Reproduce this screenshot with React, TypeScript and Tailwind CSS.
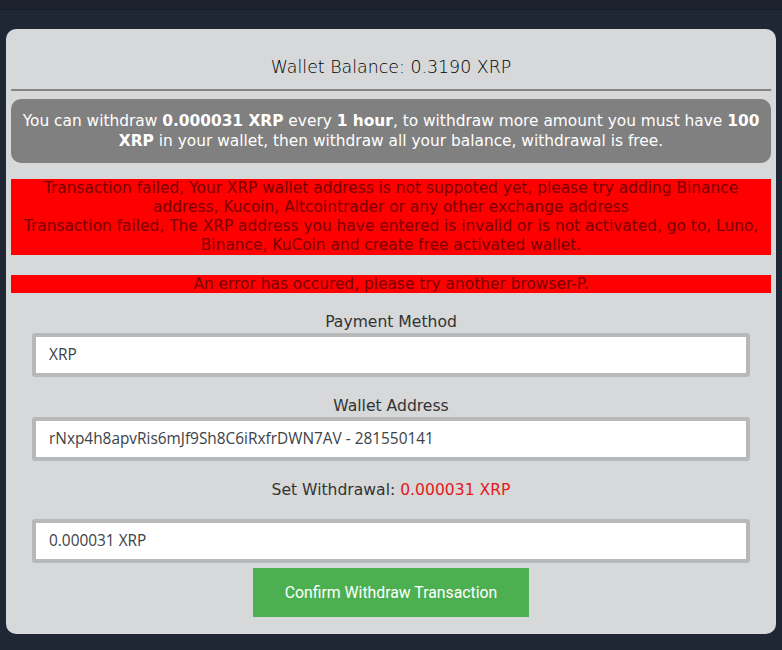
import React, { useState } from 'react';

const body = { fontFamily: '"DejaVu Sans", "Open Sans", sans-serif' };
const inputFont = { fontFamily: '"Open Sans", "Noto Sans", sans-serif' };

const Field: React.FC<{ label: React.ReactNode; value: string; labelClass?: string }> = ({
    label,
    value,
    labelClass = '',
}) => (
    <div className="px-[21px]">
        <p className={`text-center text-[15.6px] leading-[22px] text-[#333] ${labelClass}`}>{label}</p>
        <div className="h-[44px] rounded-[3px] border-[4px] border-[#b7b8b9] bg-white flex items-center px-[13px]">
            <span className="text-[15.4px] text-[#3c4248]" style={inputFont}>{value}</span>
        </div>
    </div>
);

const App: React.FC = () => {
    const [amount] = useState('0.000031 XRP');

    return (
        <div className="min-h-[650px] bg-[#1f2735]" style={body}>
            <div className="h-[10px] bg-[#1b222e] border-b border-[#171d27]" />
            <div className="px-[6px] pt-[19px] pb-[16px]">
                <div className="bg-[#d6d8da] rounded-[10px] px-[5px] pb-[17px]">
                    <h2 className="text-center text-[17.4px] leading-[22px] font-light text-[#000] pt-[27px] pb-[11px]">
                        Wallet Balance: 0.3190 XRP
                    </h2>
                    <div className="h-[2px] bg-[#858585]" />

                    <div className="mt-[8px] bg-[#808080] rounded-[10px] px-1 py-[12px] text-center text-white text-[15.4px] leading-[20px]">
                        You can withdraw <b>0.000031 XRP</b> every <b>1 hour</b>, to withdraw more amount you must have <b>100 XRP</b> in your wallet, then withdraw all your balance, withdrawal is free.
                    </div>

                    <div className="mt-[16px] bg-[#ff0000] text-center text-[#7a0000] text-[15.4px] leading-[19px]">
                        Transaction failed, Your XRP wallet address is not suppoted yet, please try adding Binance address, Kucoin, Altcointrader or any other exchange address
                        <br />
                        Transaction failed, The XRP address you have entered is invalid or is not activated, go to, Luno, Binance, KuCoin and create free activated wallet.
                    </div>

                    <div className="mt-[20px] bg-[#ff0000] text-center text-[#7a0000] text-[15.4px] leading-[18px]">
                        An error has occured, please try another browser-P.
                    </div>

                    <div className="mt-[18px] flex flex-col gap-[18px]">
                        <Field label="Payment Method" value="XRP" />
                        <Field label="Wallet Address" value="rNxp4h8apvRis6mJf9Sh8C6iRxfrDWN7AV - 281550141" />
                        <Field
                            label={<>Set Withdrawal: <span className="text-[#e3191b]">0.000031 XRP</span></>}
                            value={amount}
                            labelClass="mb-[18px]"
                        />
                    </div>

                    <div className="flex justify-center mt-[5px]">
                        <button
                            className="w-[276px] h-[49px] bg-[#4caf50] text-white text-[15.8px]"
                            style={{ fontFamily: 'Roboto, "Open Sans", sans-serif' }}
                        >
                            Confirm Withdraw Transaction
                        </button>
                    </div>
                </div>
            </div>
        </div>
    );
};

export default App;
